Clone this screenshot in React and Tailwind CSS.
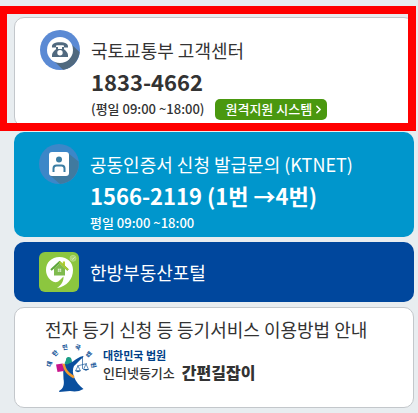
import { ChevronRight } from 'lucide-react'

const emblemLetters = [
  { char: '대', x: 4, y: 22, angle: -75 },
  { char: '한', x: 10, y: 11, angle: -45 },
  { char: '민', x: 20, y: 5, angle: -12 },
  { char: '국', x: 33, y: 5, angle: 18 },
  { char: '법', x: 44, y: 12, angle: 45 },
  { char: '원', x: 49, y: 23, angle: 75 },
]

function PhoneIcon() {
  return (
    <svg viewBox="0 0 40 40" className="size-10 shrink-0" aria-hidden="true">
      <circle cx="20" cy="20" r="20" fill="#5b8ad4" />
      <path d="M32 15 L39.6 22 A20 20 0 0 1 24.5 39.5 L23 39.8 L14 31 Z" fill="#50697f" />
      <circle cx="20" cy="20" r="13" fill="#fff" />
      <path
        d="M12 17.5 C11.5 13.8 14.5 12.3 20 12.3 C25.5 12.3 28.5 13.8 28 17.5 L24.2 17.5 L23.6 15.3 L16.4 15.3 L15.8 17.5 Z"
        fill="#50697f"
      />
      <path
        d="M16 17 h2 v2 h4 v-2 h2 v2.2 C25.5 20.5 28 22.5 28 25 V27 H12 V25 C12 22.5 14.5 20.5 16 19.2 Z"
        fill="#50697f"
      />
      <circle cx="20" cy="22.8" r="2.7" fill="#fff" />
    </svg>
  )
}

function CertificateIcon() {
  return (
    <svg viewBox="0 0 40 40" className="size-10 shrink-0" aria-hidden="true">
      <circle cx="20" cy="20" r="20" fill="#3c87c8" />
      <path d="M29 9 L39.5 17.5 A20 20 0 0 1 21 40 L10.5 31 Z" fill="#407a9f" />
      <rect x="10" y="8" width="20" height="24" rx="3" fill="#fff" />
      <circle cx="20" cy="15.5" r="3" fill="#3a7da3" />
      <path d="M14.5 28 V24.5 Q14.5 21.5 17.5 21.5 H22.5 Q25.5 21.5 25.5 24.5 V28" fill="none" stroke="#3a7da3" strokeWidth="2" />
    </svg>
  )
}

function HouseIcon() {
  return (
    <svg viewBox="0 0 40 40" className="size-10 shrink-0" aria-hidden="true">
      <rect width="40" height="40" rx="6" fill="#8cc63f" />
      <circle cx="34" cy="6.3" r="3" fill="#a9d46f" stroke="#c5e39c" strokeWidth="0.6" />
      <path d="M32.6 6.3 L33.8 7.4 L35.6 5.2" fill="none" stroke="#e4f3d0" strokeWidth="0.8" />
      <path
        d="M20.5 5 C28.5 5 34 10.5 34 18 C34 27 28 34.5 18 36 C22.5 33 24.8 29 24.5 24.5 L21.5 27.5 C20 29 18.5 30.3 16.5 30.3 C11 29 7 24 7 18 C7 10.5 12.5 5 20.5 5 Z"
        fill="#fff"
      />
      <path d="M15 16.5 V23.5 H26 V16.5 L20.5 11.5 Z" fill="#7fbb4e" />
      <path d="M23.8 9.5 H26 V15 L23.8 13 Z" fill="#b5cf35" />
      <path d="M12 18 L20.5 10 L29 18" fill="none" stroke="#5da63b" strokeWidth="2" />
      <path d="M20.5 10 L29 18" fill="none" stroke="#a8cb34" strokeWidth="2" />
      <path d="M18.8 16.5 h3.4 v3.4 h-3.4 Z M20.5 16.5 v3.4 M18.8 18.2 h3.4" fill="#fff" stroke="#7fbb4e" strokeWidth="0.5" />
    </svg>
  )
}

function CourtEmblem() {
  return (
    <svg viewBox="0 0 54 50" className="h-[50px] w-[54px] shrink-0" aria-hidden="true">
      {emblemLetters.map((l) => (
        <text
          key={l.char}
          transform={`translate(${l.x} ${l.y}) rotate(${l.angle})`}
          textAnchor="middle"
          dominantBaseline="central"
          fontSize="6"
          fontWeight="900"
          fill="#1b5a9b"
        >
          {l.char}
        </text>
      ))}
      {/* robe and raised arm */}
      <path
        d="M18 23 C21 20.5 25 21 28 19.5 C31 17.5 34 14.5 38.5 14 L38 15.5 C34.5 18 32 21.5 29 24 C27.5 27 27.5 31 29 35 C31 40 34.5 44 38.5 47 C34 49.5 30 50 25 49 L14 50 L14.5 48.5 C18.5 47 19.5 42 18.5 37 Z"
        fill="#0a4f9e"
      />
      <path d="M21 18 A2.8 2.8 0 0 1 26.6 17.5 L27 20 L22 22.5 L19.5 21.5 Z" fill="#1b9e86" />
      <path d="M11 22.5 L17.5 21.5 L19 29 L12.5 30 Z" fill="#c8158c" />
      <path d="M17.5 21.5 C18 28 22 33 28.5 36.5 L29.5 34 C24 31 20.5 27 20 22 Z" fill="#f39a2d" />
      {/* scales */}
      <path d="M37.5 14.5 V27 M32 24 L42 21.5 M33 24 L30.5 29 H35.5 L33 24 M41 22 L38.5 27.5 H43.5 L41 22" fill="none" stroke="#1b5a9b" strokeWidth="0.7" />
      <path d="M30.5 28.5 Q33 32 35.5 28.5 Z M38.5 27 Q41 30.5 43.5 27 Z" fill="#1b5a9b" />
    </svg>
  )
}

function ContactCard({ icon, title, phone, children, className }) {
  return (
    <section className={`flex items-start gap-[11px] rounded-[10px] pl-[25px] ${className}`}>
      <div className="pt-3">{icon}</div>
      <div className="pt-[17px]">
        <h2 className="text-[18px] leading-[30px]">{title}</h2>
        <p className="text-[22px] leading-8 font-bold">{phone}</p>
        <div className="flex items-center gap-[11px] text-[13px] leading-6 font-medium">{children}</div>
      </div>
    </section>
  )
}

export default function App() {
  return (
    <main className="flex min-h-screen flex-col gap-[5px] bg-[#e8edf0] pt-[17px] pr-1 pb-[6px] pl-[14px] font-['Noto_Sans_CJK_KR',sans-serif] whitespace-nowrap text-[#333]">
      <div className="relative">
        <ContactCard
          icon={<PhoneIcon />}
          title="국토교통부 고객센터"
          phone="1833-4662"
          className="border border-[#c3c7cb] bg-white pb-[5px]"
        >
          <span>(평일 09:00 ~18:00)</span>
          <button
            type="button"
            className="flex h-[21px] items-center rounded-[5px] bg-[#4a980f] pr-[2px] pl-[10px] text-[13px] text-white"
          >
            원격지원 시스템
            <ChevronRight size={13} strokeWidth={3} />
          </button>
        </ContactCard>
        {/* highlight around the customer center */}
        <div className="pointer-events-none absolute -top-[11px] -right-[2px] -bottom-1 -left-[14px] border-8 border-l-[7px] border-[#ff0000]" />
      </div>

      <ContactCard
        icon={<CertificateIcon />}
        title="공동인증서 신청 발급문의 (KTNET)"
        phone="1566-2119 (1번 →4번)"
        className="bg-[#0096cc] pb-[2px] text-white"
      >
        <span>평일 09:00 ~18:00</span>
      </ContactCard>

      <a href="#hanbang" className="flex items-center gap-[11px] rounded-[10px] bg-[#00479d] py-[10px] pl-[25px] text-white">
        <HouseIcon />
        <span className="py-[5px] text-[18px] leading-[30px]">한방부동산포털</span>
      </a>

      <a href="#guide" className="rounded-[10px] border border-[#c3c7cb] bg-white pt-[6px] pb-[15px] pl-[30px]">
        <p className="text-[18px] leading-[30px]">전자 등기 신청 등 등기서비스 이용방법 안내</p>
        <div className="-mt-[2px] flex items-start">
          <CourtEmblem />
          <div className="ml-1 grid grid-cols-[auto_1fr] items-end gap-x-[7px] pt-[4px] font-bold">
            <div className="leading-[18px]">
              <p className="text-[11px] text-[#003f87]">대한민국 법원</p>
              <p className="text-[13px] font-medium">인터넷등기소</p>
            </div>
            <strong className="text-[16px] leading-5">간편길잡이</strong>
          </div>
        </div>
      </a>
    </main>
  )
}
